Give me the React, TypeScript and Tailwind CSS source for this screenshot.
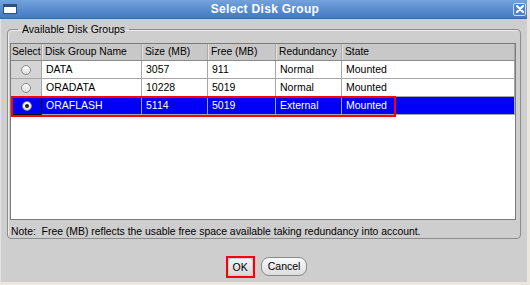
import { Fragment } from "react";

type Row = { name: string; size: string; free: string; redundancy: string; state: string; selected?: boolean };

const rows: Row[] = [
  { name: "DATA", size: "3057", free: "911", redundancy: "Normal", state: "Mounted" },
  { name: "ORADATA", size: "10228", free: "5019", redundancy: "Normal", state: "Mounted" },
  { name: "ORAFLASH", size: "5114", free: "5019", redundancy: "External", state: "Mounted", selected: true },
];

const headers = ["Select", "Disk Group Name", "Size (MB)", "Free (MB)", "Redundancy", "State"];

const Radio = ({ checked }: { checked?: boolean }) => (
  <div className="w-[10px] h-[10px] rounded-full border border-[#8a8a8a] bg-gradient-to-b from-[#ffffff] to-[#dcdcdc] flex items-center justify-center">
    {checked && <div className="w-[4px] h-[4px] rounded-full bg-[#222]" />}
  </div>
);

const App = () => {
  return (
    <div className="w-[530px] h-[285px] bg-[#ebe7df] font-['Liberation_Sans',Arial,sans-serif] overflow-hidden">
      <div className="w-[527px] h-[282px] flex flex-col">
        {/* title bar */}
        <div className="h-[19px] flex items-center bg-gradient-to-b from-[#74a2dc] to-[#4179c2] border-b border-[#3a6aa8]">
          <div className="ml-[3px] w-[14px] h-[10px] bg-white border border-[#2e4f7c] border-t-[3px]" />
          <div className="flex-1 text-center text-white font-bold text-[12px] tracking-[0.3px]">Select Disk Group</div>
          <div className="mr-[1px] w-[13px] h-[13px] rounded-[2px] border border-[#c9dbf2] bg-[#4f82c6] flex items-center justify-center">
            <svg width="8" height="8" viewBox="0 0 8 8">
              <path d="M1 1 L7 7 M7 1 L1 7" stroke="white" strokeWidth="2" strokeLinecap="round" />
            </svg>
          </div>
        </div>

        {/* body */}
        <div className="flex-1 bg-[#cecece] border-l border-[#e2e2e2] flex flex-col px-[6px]">
          <fieldset className="mt-[4px] h-[216px] border border-[#8c8c8c] rounded-[4px] pl-[2px] pr-[4px] flex flex-col shadow-[inset_1px_1px_0_#ececec]">
            <legend className="ml-[8px] px-[4px] text-[10.5px] leading-[13px] text-black">Available Disk Groups</legend>
            <div className="mt-[7px] h-[177px] border border-[#7a7a7a] bg-white flex flex-col relative">
              <div className="grid grid-cols-[31px_100px_66px_68px_66px_1fr] h-[17px] bg-[#c8c8c8] border-b border-[#8a8a8a] text-[10.3px] text-black">
                {headers.map((h, i) => (
                  <div
                    key={h}
                    className={`flex items-center border-r border-[#a9a9a9] whitespace-nowrap overflow-hidden ${
                      i === 0 ? "pl-[1px]" : "pl-[2px] border-l border-l-[#e4e4e4]"
                    }`}
                  >
                    {h}
                  </div>
                ))}
              </div>
              {rows.map((r) => (
                <div
                  key={r.name}
                  className={`grid grid-cols-[31px_100px_66px_68px_66px_1fr] h-[18px] text-[10.5px] ${
                    r.selected ? "bg-[#0000f8] text-white" : "bg-white text-black"
                  }`}
                >
                  <div
                    className={`flex items-center justify-center ${
                      r.selected ? "bg-[#0000f8] border border-[#111]" : "bg-[#d4d4d4] border-r border-b border-[#a6a6a6]"
                    }`}
                  >
                    <Radio checked={r.selected} />
                  </div>
                  {[r.name, r.size, r.free, r.redundancy, r.state].map((v, i) => (
                    <Fragment key={i}>
                      <div className="pl-[4px] flex items-center border-r border-b border-[#a6a6a6]">{v}</div>
                    </Fragment>
                  ))}
                </div>
              ))}
              {/* highlight around the chosen row */}
              <div className="absolute left-0 top-[52px] w-[385px] h-[21px] border-2 border-[#ff0000]" />
            </div>
            <div className="mt-[4px] pl-[1px] text-[10.4px] text-black whitespace-nowrap">
              Note:&nbsp;&nbsp;Free (MB) reflects the usable free space available taking redundancy into account.
            </div>
          </fieldset>

          <div className="mt-[17px] flex justify-center gap-[6px] pl-[5px]">
            <div className="border-2 border-[#ff0000] p-[1px] flex">
              <button className="h-[16px] px-[4px] rounded-[3px] bg-gradient-to-b from-[#f4f4f4] to-[#d8d8d8] text-[10.5px] text-black leading-none">
                OK
              </button>
            </div>
            <button className="h-[19px] mt-[1px] px-[6px] rounded-[8px] border border-[#8a8a8a] bg-gradient-to-b from-[#fafafa] to-[#dcdcdc] text-[10.5px] text-black leading-none">
              Cancel
            </button>
          </div>
        </div>
      </div>
    </div>
  );
};

export default App;
